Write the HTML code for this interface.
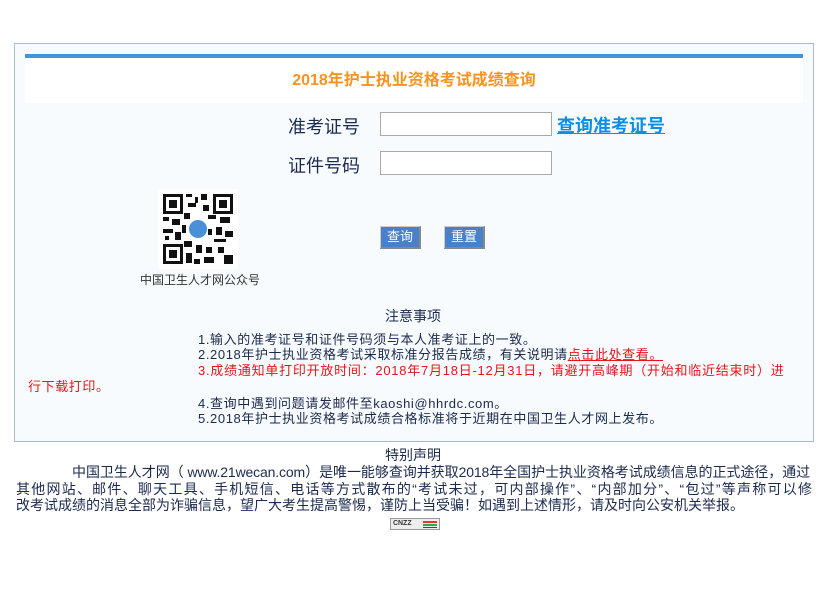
<!DOCTYPE html>
<html><head><meta charset="utf-8"><style>
body{margin:0;width:820px;height:602px;background:#fff;font-family:"Liberation Sans","Noto Sans CJK SC",sans-serif;position:relative;overflow:hidden}
.a{position:absolute;white-space:nowrap}
.box{position:absolute;left:14px;top:43px;width:798px;height:397px;border:1px solid #a9bccb;background:#f7fbfd}
.bar{position:absolute;left:25px;top:54px;width:778px;height:4px;background:#4394d9}
.tt{position:absolute;left:25px;top:58px;width:778px;height:45px;background:#fff;text-align:center;color:#f7931e;font-weight:bold;font-size:16px;line-height:46px}
.lab{font-size:18px;color:#1b2a4e}
.in{position:absolute;width:170px;height:22px;border:1px solid #aaa;background:#fff}
.btn{position:absolute;width:38px;height:20px;background:#4a7fc9;color:#fff;font-size:13px;text-align:center;line-height:20px;border-right:2px solid #888;border-bottom:2px solid #888;border-left:1px solid #ccc;border-top:1px solid #ccc}
.n{font-size:13px;color:#1b2a4e;line-height:14px;letter-spacing:0.6px}
.r{color:#e8141a}
.pl{position:absolute;left:16px;width:796px;font-size:14px;line-height:17px;color:#1b2a4e;white-space:nowrap;text-align:justify;text-align-last:justify}
</style></head><body>
<div class="box"></div>
<div class="bar"></div>
<div class="tt">2018年护士执业资格考试成绩查询</div>
<div class="a lab" style="left:288px;top:113px">准考证号</div>
<div class="in" style="left:380px;top:112px"></div>
<div class="a" style="left:557px;top:112px;font-size:18px;font-weight:bold;color:#0a8ee8;text-decoration:underline">查询准考证号</div>
<div class="a lab" style="left:288px;top:152px">证件号码</div>
<div class="in" style="left:380px;top:151px"></div>
<div class="btn" style="left:380px;top:226px">查询</div>
<div class="btn" style="left:444px;top:226px">重置</div>
<svg class="a" style="left:158px;top:189px" width="80" height="80" viewBox="0 0 80 80">
<rect width="80" height="80" fill="#fff"/>
<g fill="#111">
<rect x="5" y="5" width="20" height="20"/><rect x="55" y="5" width="20" height="20"/><rect x="5" y="55" width="20" height="20"/>
</g>
<g fill="#fff"><rect x="8" y="8" width="14" height="14"/><rect x="58" y="8" width="14" height="14"/><rect x="8" y="58" width="14" height="14"/></g>
<g fill="#111"><rect x="11" y="11" width="8" height="8"/><rect x="61" y="11" width="8" height="8"/><rect x="11" y="61" width="8" height="8"/>
<rect x="28" y="5" width="6" height="3"/><rect x="37" y="8" width="3" height="6"/><rect x="43" y="5" width="6" height="6"/><rect x="30" y="14" width="8" height="4"/><rect x="45" y="16" width="6" height="6"/>
<rect x="5" y="28" width="6" height="4"/><rect x="14" y="30" width="8" height="6"/><rect x="5" y="40" width="10" height="4"/><rect x="17" y="43" width="6" height="8"/><rect x="7" y="47" width="4" height="4"/>
<rect x="26" y="24" width="6" height="6"/><rect x="50" y="26" width="8" height="4"/><rect x="62" y="28" width="10" height="6"/><rect x="58" y="38" width="6" height="8"/><rect x="67" y="42" width="8" height="6"/><rect x="56" y="50" width="12" height="3"/>
<rect x="26" y="52" width="8" height="6"/><rect x="38" y="56" width="6" height="8"/><rect x="48" y="58" width="6" height="6"/><rect x="28" y="64" width="6" height="10"/><rect x="46" y="68" width="10" height="6"/><rect x="60" y="58" width="6" height="6"/><rect x="66" y="66" width="9" height="9"/><rect x="36" y="70" width="6" height="5"/>
<rect x="24" y="36" width="4" height="8"/><rect x="50" y="40" width="4" height="6"/></g>
<circle cx="40" cy="40" r="9" fill="#4a90d9"/>
</svg>
<div class="a" style="left:140px;top:271px;font-size:12px;color:#333">中国卫生人才网公众号</div>
<div class="a" style="left:385px;top:306px;font-size:14px;color:#1b2a4e">注意事项</div>
<div class="a n" style="left:198px;top:333px">1.输入的准考证号和证件号码须与本人准考证上的一致。</div>
<div class="a n" style="left:198px;top:348px">2.2018年护士执业资格考试采取标准分报告成绩，有关说明请<span class="r" style="text-decoration:underline">点击此处查看。</span></div>
<div class="a n r" style="left:198px;top:364px;letter-spacing:0.75px">3.成绩通知单打印开放时间：2018年7月18日-12月31日，请避开高峰期（开始和临近结束时）进</div>
<div class="a n r" style="left:28px;top:380px">行下载打印。</div>
<div class="a n" style="left:198px;top:397px">4.查询中遇到问题请发邮件至kaoshi@hhrdc.com。</div>
<div class="a n" style="left:198px;top:412px">5.2018年护士执业资格考试成绩合格标准将于近期在中国卫生人才网上发布。</div>
<div class="a" style="left:385px;top:445px;font-size:14px;color:#1b2a4e">特别声明</div>
<div class="pl" style="top:464px;left:72px;width:738px;letter-spacing:-0.15px">中国卫生人才网（ www.21wecan.com）是唯一能够查询并获取2018年全国护士执业资格考试成绩信息的正式途径，通过</div>
<div class="pl" style="top:481px">其他网站、邮件、聊天工具、手机短信、电话等方式散布的“考试未过，可内部操作”、“内部加分”、“包过”等声称可以修</div>
<div class="pl" style="top:497px;width:725px">改考试成绩的消息全部为诈骗信息，望广大考生提高警惕，谨防上当受骗！如遇到上述情形，请及时向公安机关举报。</div>
<div class="a" style="left:390px;top:518px;width:48px;height:10px;border:1px solid #999;background:#eee;font-size:7px;line-height:10px;font-weight:bold;color:#333">&nbsp;CNZZ<span style="position:absolute;left:32px;top:2px;width:14px;height:2px;background:#e33"></span><span style="position:absolute;left:32px;top:5px;width:14px;height:2px;background:#3a3"></span><span style="position:absolute;left:32px;top:8px;width:14px;height:1px;background:#33c"></span></div>
</body></html>
